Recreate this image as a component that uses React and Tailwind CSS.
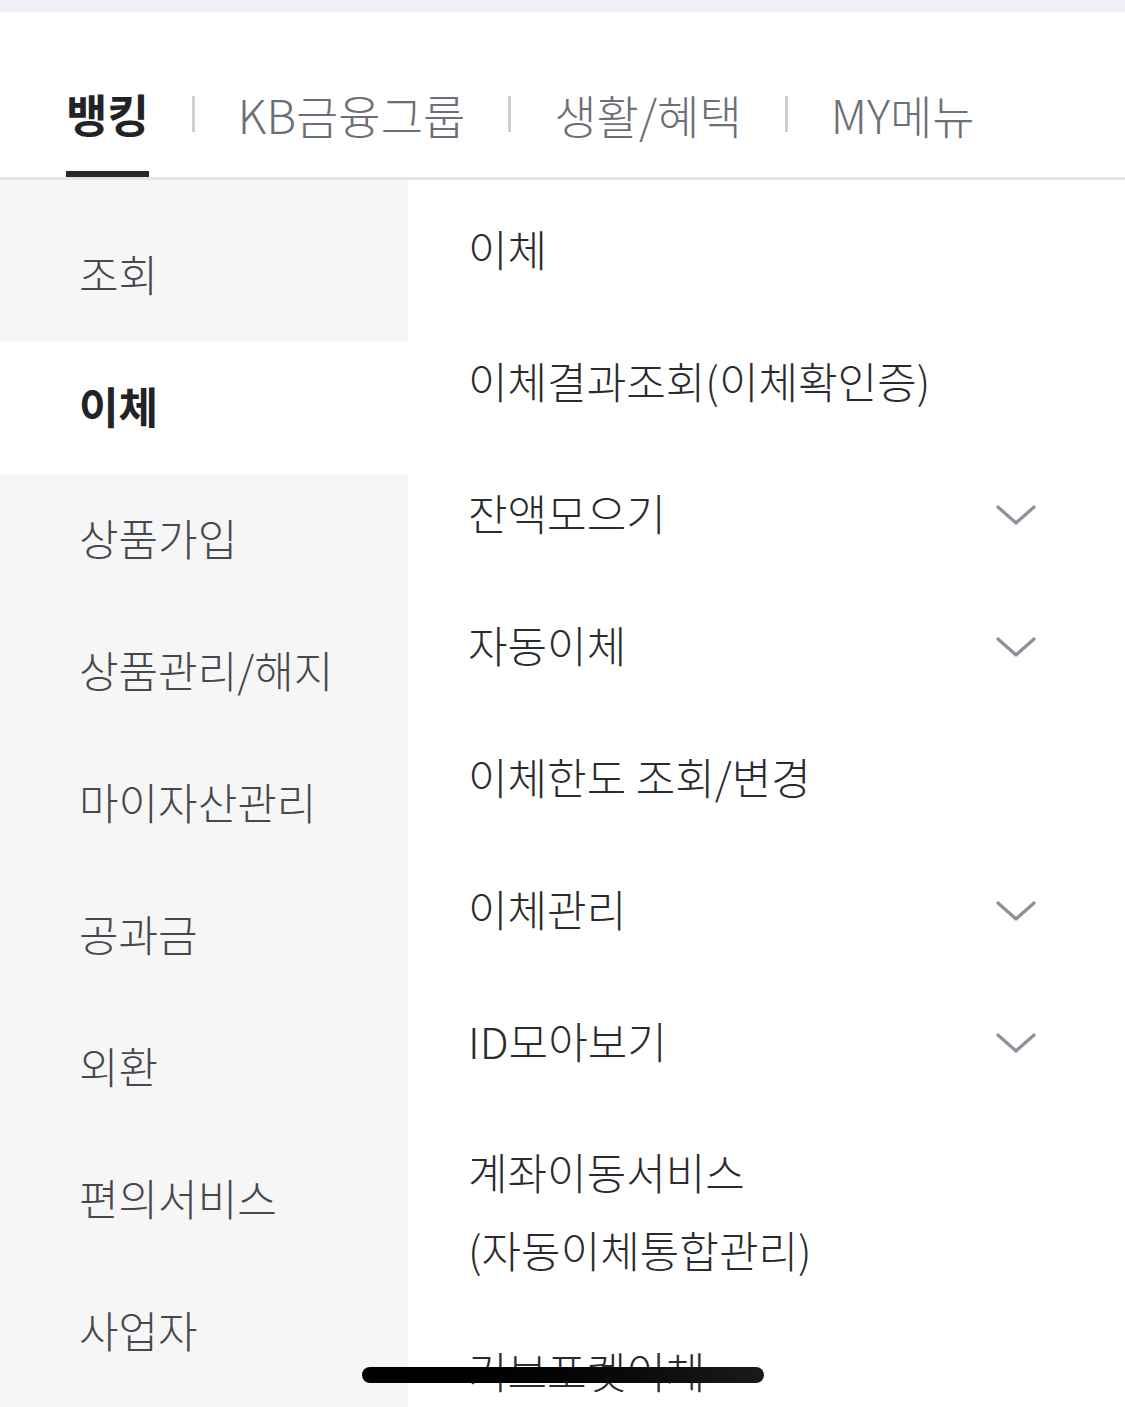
const font = { fontFamily: '"Noto Sans CJK KR", "Noto Sans", sans-serif' };

// Left side categories
const categories = [
  "조회",
  "이체",
  "상품가입",
  "상품관리/해지",
  "마이자산관리",
  "공과금",
  "외환",
  "편의서비스",
  "사업자",
];

// Right side menu items; expandable ones get a chevron
const items = [
  { label: "이체" },
  { label: "이체결과조회(이체확인증)" },
  { label: "잔액모으기", more: true },
  { label: "자동이체", more: true },
  { label: "이체한도 조회/변경" },
  { label: "이체관리", more: true },
  { label: "ID모아보기", more: true },
];

function Chevron() {
  return (
    <svg width="42" height="22" viewBox="0 0 42 22" fill="none" className="mt-[5px]">
      <polyline
        points="3,3 21,19 39,3"
        stroke="#8b9099"
        strokeWidth="3.2"
        strokeLinecap="round"
        strokeLinejoin="round"
      />
    </svg>
  );
}

function Tabs() {
  const tabs = ["KB금융그룹", "생활/혜택", "MY메뉴"];
  return (
    <div className="bg-white border-b-[3px] border-[#e4e5e9]">
      <div className="h-[12px] bg-[#eff0f3]" />
      <div className="flex items-start pl-[66px] pt-[72px]">
        <div className="flex flex-col">
          <span className="text-[45px] leading-[60px] font-bold text-[#222326]">뱅킹</span>
          <div className="mt-[27px] h-[6px] bg-[#26282c]" />
        </div>
        {tabs.map((t) => (
          <div key={t} className="flex items-center h-[60px]">
            <div className="mx-[43px] w-[3px] h-[36px] bg-[#cdcfd3]" />
            <span className="text-[46px] leading-[60px] font-light text-[#6c6f76]">{t}</span>
          </div>
        ))}
      </div>
    </div>
  );
}

export default function App() {
  return (
    <div className="relative w-[1125px] h-[1407px] overflow-hidden bg-white" style={font}>
      <Tabs />

      <div className="flex">
        {/* category column */}
        <div className="w-[408px] shrink-0 bg-[#f6f6f6] pt-[30px] h-[1300px]">
          {categories.map((c) => {
            const active = c === "이체";
            return (
              <div
                key={c}
                className={
                  "h-[132px] flex items-center pl-[79px] pb-[5px] text-[43px] " +
                  (active ? "bg-white font-bold text-[#222326]" : "font-light text-[#46484d]")
                }
              >
                {c}
              </div>
            );
          })}
        </div>

        {/* menu column */}
        <div className="flex-1 pt-[2px] pl-[60px] pr-[88px]">
          {items.map((it) => (
            <div key={it.label} className="h-[132px] flex items-center justify-between">
              <span className="text-[43px] font-light text-[#2a2b2e]">{it.label}</span>
              {it.more && <Chevron />}
            </div>
          ))}
          <div className="pt-[26px] pb-[16px] text-[43px] leading-[78px] font-light text-[#2a2b2e]">
            계좌이동서비스
            <br />
            (자동이체통합관리)
          </div>
          <div className="h-[132px] flex items-center text-[43px] font-light text-[#2a2b2e]">
            기브포켓이체
          </div>
        </div>
      </div>

      {/* home indicator */}
      <div className="absolute left-[362px] top-[1367px] w-[402px] h-[16px] rounded-full bg-gradient-to-r from-[#000] to-[#1a1a1a]" />
    </div>
  );
}
